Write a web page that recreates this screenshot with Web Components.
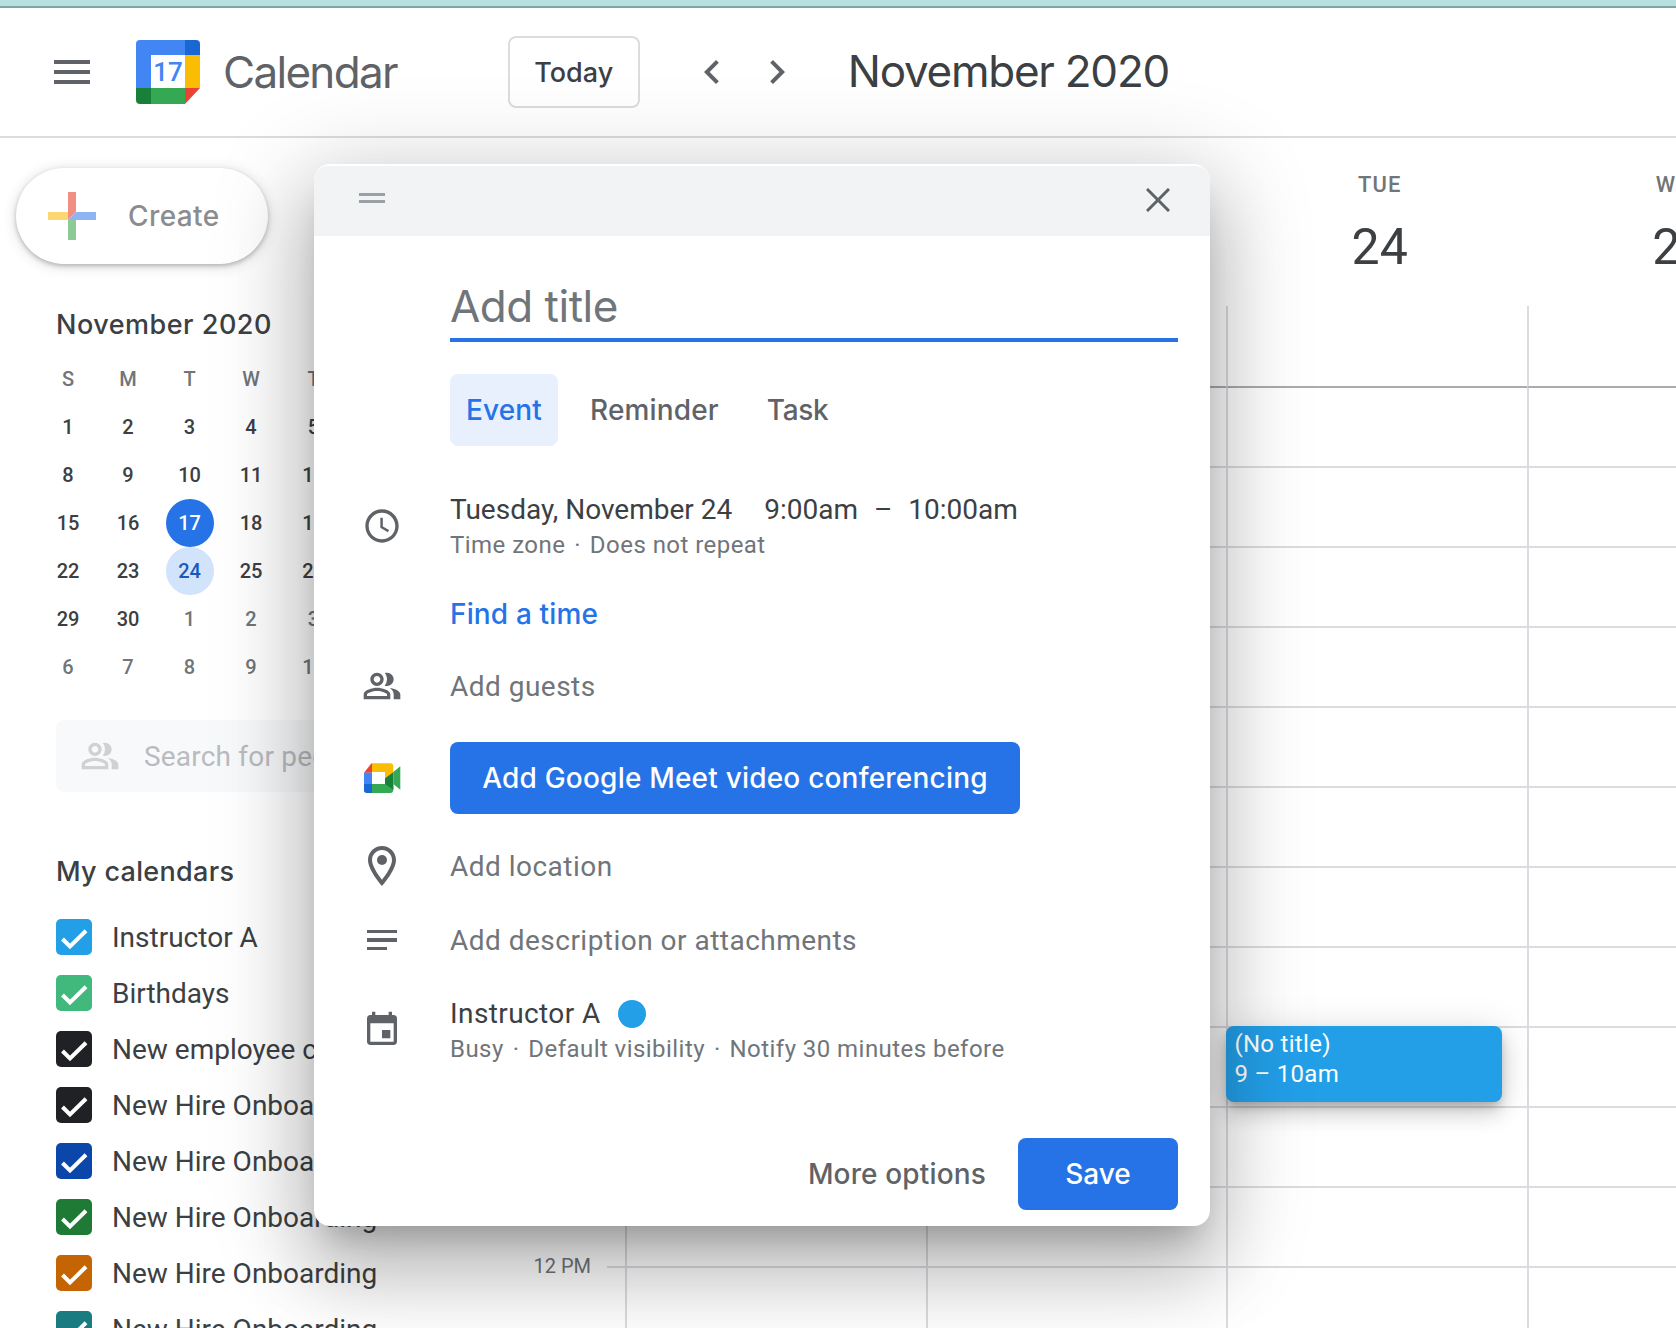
<!DOCTYPE html>
<html lang="en">
<head>
<meta charset="utf-8">
<title>Calendar</title>
<style>
  html, body { margin: 0; height: 100%; overflow: hidden; background: #fff; }
</style>
</head>
<body>
<gc-app></gc-app>
<script>
const SANS = '"Inter", "Roboto", sans-serif';
const BODY = '"Roboto", "Liberation Sans", sans-serif';

const ICONS = {
  clock: '<path d="M11.99 2C6.47 2 2 6.48 2 12s4.47 10 9.99 10C17.52 22 22 17.52 22 12S17.52 2 11.99 2zM12 20c-4.42 0-8-3.58-8-8s3.58-8 8-8 8 3.58 8 8-3.58 8-8 8z"/><path d="M12.5 7H11v6l4.5 2.7.75-1.23-3.75-2.22z"/>',
  people: '<path d="M15 8c0-1.42-.5-2.73-1.33-3.76.42-.14.86-.24 1.33-.24 2.21 0 4 1.79 4 4s-1.79 4-4 4c-.43 0-.84-.09-1.23-.21-.03-.01-.06-.02-.1-.03A5.98 5.98 0 0 0 15 8zm1.66 5.13C18.03 14.06 19 15.32 19 17v3h4v-3c0-2.18-3.58-3.47-6.34-3.87zM9 6c-1.1 0-2 .9-2 2s.9 2 2 2 2-.9 2-2-.9-2-2-2m0 9c-2.7 0-5.8 1.29-6 2.01V18h12v-1c-.2-.71-3.3-2-6-2M9 4c2.21 0 4 1.79 4 4s-1.79 4-4 4-4-1.79-4-4 1.79-4 4-4zm0 9c2.67 0 8 1.34 8 4v3H1v-3c0-2.66 5.33-4 8-4z"/>',
  pin: '<path d="M12 2C8.13 2 5 5.13 5 9c0 5.25 7 13 7 13s7-7.75 7-13c0-3.87-3.13-7-7-7zM7 9c0-2.76 2.24-5 5-5s5 2.24 5 5c0 2.88-2.88 7.19-5 9.88C9.92 16.21 7 11.85 7 9z"/><circle cx="12" cy="9" r="2.5"/>',
  event: '<path d="M17 12h-5v5h5v-5zM16 1v2H8V1H6v2H5c-1.11 0-1.99.9-1.99 2L3 19c0 1.1.89 2 2 2h14c1.1 0 2-.9 2-2V5c0-1.1-.9-2-2-2h-1V1h-2zm3 18H5V8h14v11z"/>',
  left: '<path d="M15.41 7.41L14 6l-6 6 6 6 1.41-1.41L10.83 12z"/>',
  right: '<path d="M8.59 16.59L10 18l6-6-6-6-1.41 1.41L13.17 12z"/>'
};

class GcIcon extends HTMLElement {
  connectedCallback() {
    const size = this.getAttribute('size') || 40;
    const color = this.getAttribute('color') || '#5f6368';
    this.attachShadow({ mode: 'open' }).innerHTML = `
      <style>
        :host { display: block; width: ${size}px; height: ${size}px; flex: none; }
        svg { display: block; width: 100%; height: 100%; fill: ${color}; }
      </style>
      <svg viewBox="0 0 24 24">${ICONS[this.getAttribute('name')]}</svg>
    `;
  }
}

class GcTopbar extends HTMLElement {
  connectedCallback() {
    this.attachShadow({ mode: 'open' }).innerHTML = `
      <style>
        :host { display: block; flex: none; }
        .strip { height: 6px; background: #b7e1e1; border-bottom: 2px solid #7fa5a8; }
        .bar {
          height: 128px;
          border-bottom: 2px solid #dadce0;
          display: flex;
          align-items: center;
          color: #5f6368;
          font-family: ${SANS};
        }
        .burger { width: 36px; margin-left: 54px; display: flex; flex-direction: column; gap: 6px; }
        .burger i { display: block; height: 4px; background: #5f6368; }
        .logo { margin-left: 46px; width: 64px; height: 64px; display: block; }
        .logo text { font: 500 26px "Roboto", sans-serif; fill: #4285f4; }
        .name { margin-left: 23px; font-size: 44px; letter-spacing: -1.7px; }
        .today {
          margin-left: 111px;
          box-sizing: border-box;
          width: 132px;
          height: 72px;
          border: 2px solid #dadce0;
          border-radius: 8px;
          display: flex;
          align-items: center;
          justify-content: center;
          font-size: 27px;
          font-weight: 500;
          color: #3c4043;
        }
        .nav { margin-left: 48px; display: flex; gap: 17px; }
        .title { margin: -3px 0 0 47px; font-size: 44px; letter-spacing: -1.25px; color: #3c4043; }
      </style>
      <div class="strip"></div>
      <div class="bar">
        <div class="burger"><i></i><i></i><i></i></div>
        <svg class="logo" viewBox="136 40 64 64">
          <path d="M140 40h45v15h-34v33h-15V44a4 4 0 0 1 4-4z" fill="#4285f4"/>
          <path d="M185 40h11a4 4 0 0 1 4 4v11h-15z" fill="#1967d2"/>
          <rect x="151" y="55" width="34" height="33" fill="#fff"/>
          <rect x="185" y="55" width="15" height="33" fill="#fbbc04"/>
          <rect x="151" y="88" width="34" height="16" fill="#34a853"/>
          <path d="M136 88h15v16h-11a4 4 0 0 1-4-4z" fill="#188038"/>
          <path d="M185 88h15l-15 16z" fill="#ea4335"/>
          <text x="168" y="81" text-anchor="middle">17</text>
        </svg>
        <div class="name">Calendar</div>
        <div class="today">Today</div>
        <div class="nav">
          <gc-icon name="left" size="48"></gc-icon>
          <gc-icon name="right" size="48"></gc-icon>
        </div>
        <div class="title">November 2020</div>
      </div>
    `;
  }
}

class GcCreate extends HTMLElement {
  connectedCallback() {
    this.attachShadow({ mode: 'open' }).innerHTML = `
      <style>
        :host {
          display: flex;
          align-items: center;
          box-sizing: border-box;
          width: 252px;
          height: 96px;
          margin: 30px 0 0 16px;
          padding-left: 32px;
          border-radius: 48px;
          background: #fff;
          box-shadow: 0 2px 4px rgba(60,64,67,.3), 0 2px 12px 2px rgba(60,64,67,.15);
        }
        svg { width: 48px; height: 48px; display: block; }
        span { margin-left: 32px; font: 500 28px ${SANS}; color: #8a8c90; letter-spacing: .4px; }
      </style>
      <svg viewBox="48 192 48 48">
        <path d="M68 192h8v20l-8 8z" fill="#f28f85"/>
        <path d="M48 212h20v8H48z" fill="#fbd770"/>
        <path d="M76 212h20v8H68z" fill="#8fb4f6"/>
        <rect x="68" y="220" width="8" height="20" fill="#8cca96"/>
      </svg>
      <span>Create</span>
    `;
  }
}

class GcMiniCal extends HTMLElement {
  connectedCallback() {
    const heads = ['S', 'M', 'T', 'W', 'T', 'F', 'S'];
    const days = [
      1, 2, 3, 4, 5, 6, 7, 8, 9, 10, 11, 12, 13, 14, 15, 16, 17, 18, 19, 20, 21,
      22, 23, 24, 25, 26, 27, 28, 29, 30, 1, 2, 3, 4, 5, 6, 7, 8, 9, 10, 11, 12
    ];
    const cells = days.map((d, i) => {
      let cls = 'day';
      if (i >= 30) cls += ' other';
      if (i === 16) cls += ' today';
      if (i === 23) cls += ' picked';
      return `<div class="${cls}"><span>${d}</span></div>`;
    }).join('');
    this.attachShadow({ mode: 'open' }).innerHTML = `
      <style>
        :host { display: block; margin-top: 41px; }
        .title { margin-left: 56px; font: 500 27px/40px ${SANS}; color: #3c4043; letter-spacing: .5px; }
        .grid {
          margin: 10px 0 0 38px;
          display: grid;
          grid-template-columns: 60px 60px 63px 60px 65px 60px 60px;
          grid-auto-rows: 48px;
          font: 500 20px ${BODY};
          color: #3c4043;
        }
        .grid > div { display: flex; align-items: center; justify-content: center; }
        .head { color: #70757a; }
        .other { color: #70757a; }
        .day span {
          width: 48px;
          height: 48px;
          border-radius: 50%;
          display: flex;
          align-items: center;
          justify-content: center;
        }
        .today span { background: #2573e6; color: #fff; }
        .picked span { background: #d2e3fc; color: #185abc; }
      </style>
      <div class="title">November 2020</div>
      <div class="grid">
        ${heads.map(h => `<div class="head">${h}</div>`).join('')}
        ${cells}
      </div>
    `;
  }
}

class GcPeopleSearch extends HTMLElement {
  connectedCallback() {
    this.attachShadow({ mode: 'open' }).innerHTML = `
      <style>
        :host {
          display: flex;
          align-items: center;
          box-sizing: border-box;
          width: 440px;
          height: 72px;
          margin: 29px 0 0 56px;
          padding-left: 24px;
          border-radius: 8px;
          background: #f8f9fa;
          color: #b9bcbf;
          font: 400 28px ${BODY};
          letter-spacing: .2px;
          white-space: nowrap;
        }
        span { margin-left: 24px; }
      </style>
      <gc-icon name="people" size="40" color="#cfd1d3"></gc-icon>
      <span>Search for people</span>
    `;
  }
}

class GcCheckItem extends HTMLElement {
  connectedCallback() {
    const color = this.getAttribute('color');
    this.attachShadow({ mode: 'open' }).innerHTML = `
      <style>
        :host {
          display: flex;
          align-items: center;
          height: 56px;
          margin-left: 56px;
          font: 400 28px ${BODY};
          letter-spacing: 0;
          color: #3c4043;
          white-space: nowrap;
        }
        .box { width: 36px; height: 36px; border-radius: 5px; background: ${color}; flex: none; display: block; }
        .label { margin-left: 20px; }
      </style>
      <svg class="box" viewBox="0 0 36 36"><path d="M6.500 20l7.500 7.400L30 11.800" fill="none" stroke="#fff" stroke-width="4"/></svg>
      <span class="label"><slot></slot></span>
    `;
  }
}

class GcSidebar extends HTMLElement {
  connectedCallback() {
    this.attachShadow({ mode: 'open' }).innerHTML = `
      <style>
        :host { display: block; flex: none; width: 534px; overflow: hidden; }
        h2 { margin: 58px 0 15px 56px; font: 500 27px/44px ${SANS}; color: #3c4043; letter-spacing: .3px; }
      </style>
      <gc-create></gc-create>
      <gc-mini-cal></gc-mini-cal>
      <gc-people-search></gc-people-search>
      <h2>My calendars</h2>
      <gc-check-item color="#239fe8">Instructor A</gc-check-item>
      <gc-check-item color="#41b87c">Birthdays</gc-check-item>
      <gc-check-item color="#202124">New employee checklist</gc-check-item>
      <gc-check-item color="#202124">New Hire Onboarding</gc-check-item>
      <gc-check-item color="#0b47ab">New Hire Onboarding</gc-check-item>
      <gc-check-item color="#1f7a36">New Hire Onboarding</gc-check-item>
      <gc-check-item color="#c46403">New Hire Onboarding</gc-check-item>
      <gc-check-item color="#1a7c80">New Hire Onboarding</gc-check-item>
    `;
  }
}

class GcEventChip extends HTMLElement {
  connectedCallback() {
    this.attachShadow({ mode: 'open' }).innerHTML = `
      <style>
        :host {
          position: absolute;
          top: -2px;
          left: -2px;
          z-index: 2;
          box-sizing: border-box;
          width: 276px;
          height: 76px;
          padding: 3px 8px;
          border-radius: 8px;
          background: #239fe8;
          color: #fff;
          font: 400 24px/30px ${BODY};
          letter-spacing: .3px;
          box-shadow: 0 12px 20px rgba(0,0,0,.14), 0 2px 36px rgba(0,0,0,.12), 0 6px 10px -2px rgba(0,0,0,.2);
        }
      </style>
      <div>(No title)</div>
      <div>9 – 10am</div>
    `;
  }
}

class GcWeek extends HTMLElement {
  connectedCallback() {
    // gutter + 4 day columns, the last one runs off the right edge
    const rows = [];
    for (let r = 0; r < 13; r++) {
      const label = r === 11 ? '<span>12 PM</span>' : '';
      const chip = r === 9 ? '<gc-event-chip></gc-event-chip>' : '';
      rows.push(`<div class="gutter">${label}</div>`);
      for (let c = 0; c < 4; c++) {
        rows.push(`<div class="cell${r === 0 ? ' allday' : ''}">${c === 2 ? chip : ''}</div>`);
      }
    }
    this.attachShadow({ mode: 'open' }).innerHTML = `
      <style>
        :host { display: block; flex: 1; min-width: 0; overflow: hidden; }
        .heads {
          height: 168px;
          display: grid;
          grid-template-columns: 91px repeat(4, 300.7px);
          text-align: center;
          white-space: nowrap;
        }
        .h { padding-left: 6px; }
        .dow { margin-top: 35px; font: 500 22px/24px ${BODY}; letter-spacing: 1px; color: #70757a; }
        .num { margin-top: 18px; font: 400 50px/64px ${BODY}; color: #3c4043; }
        .grid {
          display: grid;
          grid-template-columns: 91px repeat(4, 300.7px);
          grid-template-rows: 82px;
          grid-auto-rows: 80px;
        }
        .gutter {
          display: flex;
          justify-content: flex-end;
          align-items: flex-end;
          padding-right: 34px;
          font: 400 20px/24px ${BODY};
          color: #70757a;
          position: relative;
        }
        .gutter span { margin-bottom: -10px; white-space: nowrap; }
        .gutter::after {
          content: "";
          position: absolute;
          right: 0;
          bottom: 0;
          width: 18px;
          height: 2px;
          background: #dadce0;
        }
        .cell {
          position: relative;
          box-sizing: border-box;
          border-left: 2px solid #dadce0;
          border-bottom: 2px solid #dadce0;
        }
        .cell.allday { border-bottom-color: #aaabae; }
      </style>
      <div class="heads">
        <div></div>
        <div class="h"><div class="dow">SUN</div><div class="num">22</div></div>
        <div class="h"><div class="dow">MON</div><div class="num">23</div></div>
        <div class="h"><div class="dow">TUE</div><div class="num">24</div></div>
        <div class="h"><div class="dow">WED</div><div class="num">25</div></div>
      </div>
      <div class="grid">${rows.join('')}</div>
    `;
  }
}

class GcModalRow extends HTMLElement {
  connectedCallback() {
    const top = this.getAttribute('top') || 0;
    const height = this.getAttribute('height') || 72;
    this.attachShadow({ mode: 'open' }).innerHTML = `
      <style>
        :host {
          display: grid;
          grid-template-columns: 136px 1fr;
          align-items: center;
          height: ${height}px;
          margin-top: ${top}px;
        }
        .icon { display: flex; justify-content: center; align-items: center; }
      </style>
      <div class="icon"><slot name="icon"></slot></div>
      <div><slot></slot></div>
    `;
  }
}

class GcEventModal extends HTMLElement {
  connectedCallback() {
    this.attachShadow({ mode: 'open' }).innerHTML = `
      <style>
        :host {
          position: absolute;
          left: 314px;
          top: 26px;
          z-index: 5;
          width: 896px;
          height: 1062px;
          display: flex;
          flex-direction: column;
          background: #fff;
          border-radius: 16px;
          box-shadow: 0 48px 76px 6px rgba(0,0,0,.16), 0 18px 92px 16px rgba(0,0,0,.17), 0 22px 30px -14px rgba(0,0,0,.2);
          font: 400 28px ${BODY};
          color: #3c4043;
        }
        .top {
          flex: none;
          height: 70px;
          margin-top: 2px;
          border-radius: 14px 14px 0 0;
          background: #f1f3f4;
          display: flex;
          align-items: center;
          justify-content: space-between;
          padding: 0 40px 0 45px;
        }
        .grip { width: 26px; height: 4px; border-top: 3px solid #9aa0a6; border-bottom: 3px solid #9aa0a6; margin-bottom: 6px; }
        .close { display: block; width: 24px; height: 24px; margin-top: -2px; }
        .title {
          margin: 0 32px 0 136px;
          height: 106px;
          box-sizing: border-box;
          border-bottom: 4px solid #2573e6;
          display: flex;
          align-items: flex-end;
          padding-bottom: 4px;
          font: 400 44px/56px ${SANS};
          letter-spacing: -.5px;
          color: #70757a;
        }
        .tabs { display: flex; margin: 32px 0 0 136px; height: 72px; font: 500 28px ${SANS}; color: #5f6368; letter-spacing: .15px; }
        .tabs div { display: flex; align-items: center; }
        .tabs .on { width: 108px; justify-content: center; background: #e8f0fe; color: #2573e6; border-radius: 8px; }
        .tabs .reminder { margin-left: 32px; }
        .tabs .task { margin-left: 48px; letter-spacing: -.3px; }
        .line { display: flex; margin-top: 2px; line-height: 36px; }
        .line .date { margin-right: 32px; }
        .line .dash { margin: 0 16px; }
        .who { letter-spacing: .4px; }
        .sub { font-size: 24px; line-height: 34px; letter-spacing: .45px; color: #70757a; }
        .sub b { font-weight: 400; margin: 0 2.500px; }
        .muted { color: #70757a; letter-spacing: .48px; }
        .link { font: 500 28px ${SANS}; color: #2573e6; letter-spacing: .15px; }
        .meet {
          box-sizing: border-box;
          width: 570px;
          height: 72px;
          border-radius: 8px;
          background: #2573e6;
          color: #fff;
          display: flex;
          align-items: center;
          justify-content: center;
          font: 500 28px ${SANS};
          letter-spacing: .2px;
          white-space: nowrap;
        }
        .dot { align-self: center; width: 28px; height: 28px; margin-left: 17px; border-radius: 50%; background: #239fe8; }
        .foot {
          margin-top: auto;
          padding: 0 32px 16px 0;
          display: flex;
          justify-content: flex-end;
          align-items: center;
          font: 500 28px ${SANS};
          letter-spacing: .15px;
          color: #5f6368;
        }
        .save {
          width: 160px;
          height: 72px;
          margin-left: 32px;
          border-radius: 8px;
          background: #2573e6;
          color: #fff;
          display: flex;
          align-items: center;
          justify-content: center;
          letter-spacing: 0;
        }
        .lines { display: flex; flex-direction: column; gap: 5px; width: 30px; }
        .lines i { display: block; height: 3.500px; background: #5f6368; }
        .lines i:last-child { width: 20px; }
        .meet-icon { display: block; width: 40px; height: 40px; }
      </style>
      <div class="top">
        <div class="grip"></div>
        <svg class="close" viewBox="0 0 24 24"><path d="M1 1l22 22M23 1L1 23" stroke="#5f6368" stroke-width="3" fill="none"/></svg>
      </div>
      <div class="title">Add title</div>
      <div class="tabs">
        <div class="on">Event</div>
        <div class="reminder">Reminder</div>
        <div class="task">Task</div>
      </div>

      <gc-modal-row top="44">
        <gc-icon slot="icon" name="clock"></gc-icon>
        <div class="line"><span class="date">Tuesday, November 24</span><span>9:00am</span><span class="dash">–</span><span>10:00am</span></div>
        <div class="sub">Time zone <b>·</b> Does not repeat</div>
      </gc-modal-row>
      <gc-modal-row top="18" height="68">
        <div class="link">Find a time</div>
      </gc-modal-row>
      <gc-modal-row top="2">
        <gc-icon slot="icon" name="people"></gc-icon>
        <div class="muted">Add guests</div>
      </gc-modal-row>
      <gc-modal-row top="20">
        <svg slot="icon" class="meet-icon" viewBox="22 108 40 40">
          <path d="M32 113.300h-0.500L24 122.700h8z" fill="#ea4335"/>
          <path d="M32 113.300h18a3.300 3.300 0 0 1 3.300 3.300v6.700l-8.300 5v-6.300H32z" fill="#fbbc04"/>
          <rect x="24" y="122.700" width="8" height="11.300" fill="#4285f4"/>
          <path d="M24 134h8v9h-5.300a2.700 2.700 0 0 1-2.700-2.700z" fill="#1967d2"/>
          <path d="M32 134h13v-6l8.300 5.500v6.200a3.300 3.300 0 0 1-3.300 3.300H32z" fill="#34a853"/>
          <path d="M45 128.300l8.300-6v17.400l-8.300-5.700z" fill="#188038"/>
          <path d="M53.300 122l7-5.700v23.400l-7-5.700z" fill="#34a853"/>
          <rect x="32" y="122" width="13" height="12" fill="#fff"/>
        </svg>
        <div class="meet">Add Google Meet video conferencing</div>
      </gc-modal-row>
      <gc-modal-row top="16">
        <gc-icon slot="icon" name="pin" size="48"></gc-icon>
        <div class="muted">Add location</div>
      </gc-modal-row>
      <gc-modal-row top="2">
        <div slot="icon" class="lines"><i></i><i></i><i></i></div>
        <div class="muted">Add description or attachments</div>
      </gc-modal-row>
      <gc-modal-row top="18">
        <gc-icon slot="icon" name="event"></gc-icon>
        <div class="line who">Instructor A<span class="dot"></span></div>
        <div class="sub">Busy <b>·</b> Default visibility <b>·</b> Notify 30 minutes before</div>
      </gc-modal-row>

      <div class="foot">
        <div>More options</div>
        <div class="save">Save</div>
      </div>
    `;
  }
}

class GcApp extends HTMLElement {
  connectedCallback() {
    this.attachShadow({ mode: 'open' }).innerHTML = `
      <style>
        :host { display: flex; flex-direction: column; height: 100vh; overflow: hidden; }
        main { position: relative; flex: 1; min-height: 0; display: flex; }
      </style>
      <gc-topbar></gc-topbar>
      <main>
        <gc-sidebar></gc-sidebar>
        <gc-week></gc-week>
        <gc-event-modal></gc-event-modal>
      </main>
    `;
  }
}

customElements.define('gc-icon', GcIcon);
customElements.define('gc-topbar', GcTopbar);
customElements.define('gc-create', GcCreate);
customElements.define('gc-mini-cal', GcMiniCal);
customElements.define('gc-people-search', GcPeopleSearch);
customElements.define('gc-check-item', GcCheckItem);
customElements.define('gc-sidebar', GcSidebar);
customElements.define('gc-event-chip', GcEventChip);
customElements.define('gc-week', GcWeek);
customElements.define('gc-modal-row', GcModalRow);
customElements.define('gc-event-modal', GcEventModal);
customElements.define('gc-app', GcApp);
</script>
</body>
</html>
